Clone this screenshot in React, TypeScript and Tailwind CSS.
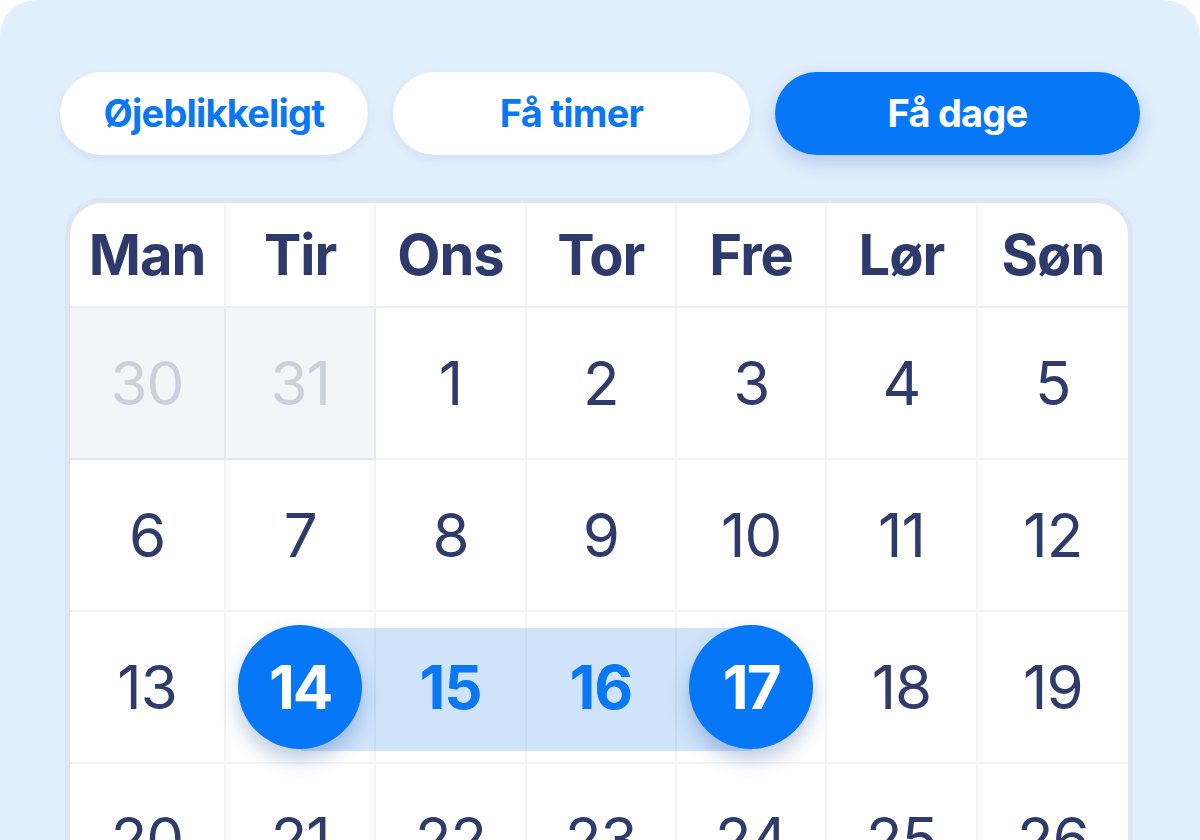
import React from "react";

const font = { fontFamily: "Inter, 'Noto Sans', sans-serif" };

const days = ["Man", "Tir", "Ons", "Tor", "Fre", "Lør", "Søn"];

const rows: { n: number; muted?: boolean }[][] = [
  [{ n: 30, muted: true }, { n: 31, muted: true }, { n: 1 }, { n: 2 }, { n: 3 }, { n: 4 }, { n: 5 }],
  [{ n: 6 }, { n: 7 }, { n: 8 }, { n: 9 }, { n: 10 }, { n: 11 }, { n: 12 }],
  [{ n: 13 }, { n: 14 }, { n: 15 }, { n: 16 }, { n: 17 }, { n: 18 }, { n: 19 }],
  [{ n: 20 }, { n: 21 }, { n: 22 }, { n: 23 }, { n: 24 }, { n: 25 }, { n: 26 }],
];

function Pill({ label, active, width }: { label: string; active?: boolean; width: string }) {
  return (
    <button
      className={
        active
          ? `${width} h-[83px] rounded-full bg-[#0677f7] text-white text-[38px] font-bold tracking-[-0.8px] shadow-[0_8px_18px_rgba(20,80,180,0.22)]`
          : `${width} h-[83px] rounded-full bg-white text-[#0a78f5] text-[38px] font-bold tracking-[-0.8px] shadow-[0_4px_10px_rgba(30,80,160,0.08)]`
      }
    >
      {label}
    </button>
  );
}

export default function App() {
  return (
    <div className="w-[1200px] h-[840px] bg-white overflow-hidden" style={font}>
      <div className="h-full bg-[#e1eefc] rounded-t-[36px] pl-[60px] pt-[72px]">
        {/* filter pills */}
        <div className="flex gap-[25px]">
          <Pill label="Øjeblikkeligt" width="w-[308px]" />
          <Pill label="Få timer" width="w-[357px]" />
          <Pill label="Få dage" active width="w-[365px]" />
        </div>

        {/* calendar */}
        <div className="mt-[48px] ml-[10px] w-[1058px] bg-white rounded-t-[32px] shadow-[0_0_0_5px_#dbe7f6]">
          <div className="grid grid-cols-[156px_repeat(6,1fr)] h-[105px] border-b-2 border-[#eceef2]">
            {days.map((d, i) => (
              <div
                key={d}
                className={`flex items-center justify-center text-[56px] font-bold tracking-[-1px] text-[#2e3a6b] ${
                  i < 6 ? "border-r-2 border-[#f2f3f6]" : ""
                }`}
              >
                {d}
              </div>
            ))}
          </div>

          {rows.map((row, r) => (
            <div key={r} className="relative grid grid-cols-[156px_repeat(6,1fr)] h-[152px]">
              {r === 2 && (
                <div className="absolute left-[231px] top-[16px] w-[451px] h-[123px] bg-[#cfe4fb]" />
              )}
              {row.map((c, i) => {
                const edge = c.n === 14 || c.n === 17;
                const inRange = c.n === 15 || c.n === 16;
                return (
                  <div
                    key={c.n}
                    className={`relative flex items-center justify-center border-b-2 border-[rgba(30,40,80,0.055)] ${
                      i < 6 ? "border-r-2" : ""
                    } ${c.muted ? "bg-[#f4f5f8]" : ""}`}
                  >
                    {edge ? (
                      <div className="w-[124px] h-[124px] rounded-full bg-[#0677f7] flex items-center justify-center text-white text-[60px] font-bold tracking-[-2px] shadow-[0_10px_20px_rgba(10,60,140,0.28)]">
                        {c.n}
                      </div>
                    ) : (
                      <span
                        className={`text-[60px] tracking-[-1px] ${
                          c.muted
                            ? "text-[#cdd0da] font-normal"
                            : inRange
                            ? "text-[#0a78f5] font-bold"
                            : "text-[#2f3b6b] font-normal"
                        }`}
                      >
                        {c.n}
                      </span>
                    )}
                  </div>
                );
              })}
            </div>
          ))}
        </div>
      </div>
    </div>
  );
}
